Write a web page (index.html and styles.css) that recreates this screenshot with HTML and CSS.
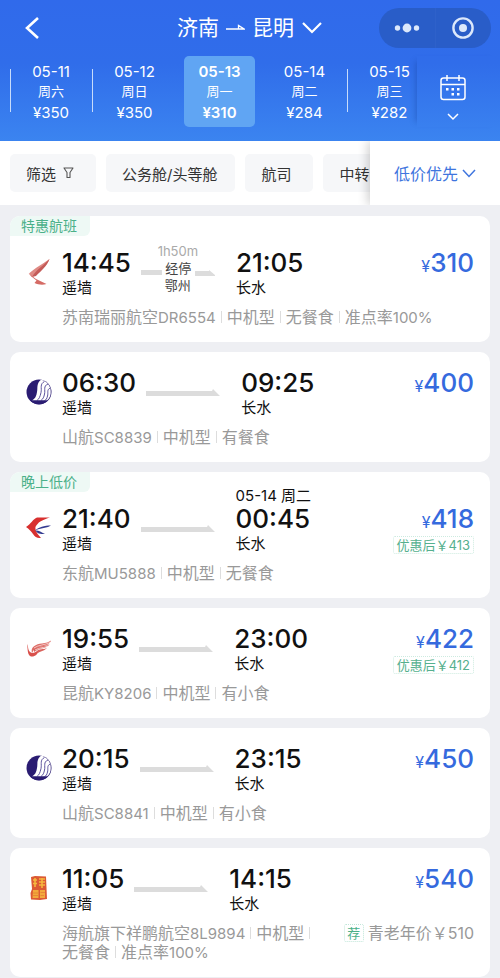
FILE: index.html
```html
<!DOCTYPE html>
<html lang="zh-CN">
<head>
<meta charset="utf-8">
<meta name="viewport" content="width=device-width, initial-scale=1">
<title>济南 - 昆明</title>
<link rel="stylesheet" href="styles.css">
</head>
<body>
<svg class="defs" aria-hidden="true">
  <symbol id="arrow" viewBox="0 0 74 7"><path d="M0 2H66L67 0L74 7H0Z" fill="#dcdcdc"/></symbol>
  <symbol id="shandong" viewBox="0 0 26 26">
    <circle cx="13" cy="13" r="12.500" fill="#2a1c72"/>
    <path d="M15 .8C10 5 12 9 11 13C10.500 17 9 20 6 21.500H21C24 19 25 16 24.700 12C25 7 20 1.500 15 .8Z" fill="#fff"/>
    <path d="M18.500 2.500C13.500 5 16 9 15 13.500C14 18 13 20 11 21.500M22 5C17 7 19.500 11 18.500 15C18 18 17 20 15 21.500M24 9C20.500 11 22.500 14 21.500 17C21 19.500 20 21 18.500 21.500" fill="none" stroke="#4c4192" stroke-width=".9"/>
    <path d="M4 21.500H22C17 26.500 9 26.500 4 21.500Z" fill="#2a1c72"/>
  </symbol>
</svg>

<header class="header">
  <div class="topbar">
    <button class="plain back" aria-label="返回"><svg width="16" height="24" viewBox="0 0 16 24"><path d="M14 2L3 12L14 22" fill="none" stroke="#fff" stroke-width="2.600"/></svg></button>
    <button class="plain title">
      <span>济南</span>
      <svg width="19" height="8" viewBox="0 0 19 8"><path d="M0 5H18L12.500 1.500V5" fill="none" stroke="#fff" stroke-width="1.300"/></svg>
      <span>昆明</span>
      <svg width="22" height="14" viewBox="0 0 22 14"><path d="M2 2L11 11L20 2" fill="none" stroke="#fff" stroke-width="2.200"/></svg>
    </button>
    <div class="capsule">
      <button class="plain" aria-label="更多"><svg width="26" height="10" viewBox="0 0 26 10"><g fill="#dce8fb"><circle cx="3.500" cy="5" r="2.700"/><circle cx="13" cy="5" r="4.400"/><circle cx="22.500" cy="5" r="2.700"/></g></svg></button>
      <button class="plain" aria-label="关闭"><svg width="24" height="24" viewBox="0 0 24 24"><circle cx="12" cy="12" r="9.600" fill="none" stroke="#dce8fb" stroke-width="2.400"/><circle cx="12" cy="12" r="4" fill="#dce8fb"/></svg></button>
    </div>
  </div>
  <div class="dates">
    <div class="strip">
      <button class="plain date first ruled"><span>05-11</span><small>周六</small><b>¥350</b></button>
      <button class="plain date ruled"><span>05-12</span><small>周日</small><b>¥350</b></button>
      <button class="plain date selected"><span>05-13</span><small>周一</small><b>¥310</b></button>
      <button class="plain date"><span>05-14</span><small>周二</small><b>¥284</b></button>
      <button class="plain date ruled"><span>05-15</span><small>周三</small><b>¥282</b></button>
    </div>
    <button class="plain calendar" aria-label="选择日期">
      <svg width="26" height="26" viewBox="0 0 26 26"><g fill="none" stroke="#fff" stroke-width="1.500"><rect x="1" y="3" width="24" height="21.500" rx="2.500"/><path d="M1 9.500H25M7 0V6M19 0V6"/></g><g fill="#fff"><rect x="6" y="13" width="2.500" height="2.500"/><rect x="11.500" y="13" width="2.500" height="2.500"/><rect x="17" y="13" width="2.500" height="2.500"/><rect x="11.500" y="18" width="2.500" height="2.500"/><rect x="17" y="18" width="2.500" height="2.500"/></g></svg>
      <svg width="12" height="8" viewBox="0 0 12 8"><path d="M1 1L6 6L11 1" fill="none" stroke="#fff" stroke-width="1.500"/></svg>
    </button>
  </div>
</header>

<nav class="filters" aria-label="筛选">
  <div class="chips">
    <button class="chip">筛选<svg width="11" height="12" viewBox="0 0 11 12"><path d="M1 1H10L7 5.500V10.500H4V5.500Z" fill="none" stroke="#555" stroke-width="1.100" stroke-linejoin="round"/></svg></button>
    <button class="chip">公务舱/头等舱</button>
    <button class="chip wide">航司</button>
    <button class="chip">中转</button>
  </div>
  <button class="plain sort">低价优先<svg width="14" height="9" viewBox="0 0 14 9"><path d="M1 1L7 7.500L13 1" fill="none" stroke="#3f75de" stroke-width="1.500"/></svg></button>
</nav>

<main class="list">
  <article class="card">
    <span class="tag">特惠航班</span>
    <div class="flight tagged">
      <svg class="logo" viewBox="0 0 26 26"><path d="M23.500 0C18 4 9 9 3 14.500L6 18L10 16C14 11 21 7 23.500 0Z" fill="#df8a84"/><path d="M23.500 0C17 7 10 11 6 18L10 17C15 12 21 7 23.500 0Z" fill="#c45b58"/><path d="M2.500 14.500L10 20L20.500 25C16 26.500 12 25.500 8.500 24L10.500 21.500L6 18Z" fill="#d56b65"/></svg>
      <div class="info">
        <div class="row">
          <div class="point"><time>14:45</time><span>遥墙</span></div>
          <div class="stopover"><small>1h50m</small><div class="via"><i></i><span>经停</span><svg width="20" height="6" viewBox="0 0 20 6"><path d="M0 1H14V0L20 5V6H0Z" fill="#dcdcdc"/></svg></div><span>鄂州</span></div>
          <div class="point"><time>21:05</time><span>长水</span></div>
          <div class="fare"><strong><small>¥</small>310</strong></div>
        </div>
        <div class="bottom"><p class="meta"><span>苏南瑞丽航空<b>DR6554</b></span><i></i><span>中机型</span><i></i><span>无餐食</span><i></i><span>准点率<b>100%</b></span></p></div>
      </div>
    </div>
  </article>

  <article class="card">
    <div class="flight">
      <svg class="logo"><use href="#shandong"/></svg>
      <div class="info">
        <div class="row">
          <div class="point"><time>06:30</time><span>遥墙</span></div>
          <svg class="arrow"><use href="#arrow"/></svg>
          <div class="point"><time>09:25</time><span>长水</span></div>
          <div class="fare"><strong><small>¥</small>400</strong></div>
        </div>
        <div class="bottom"><p class="meta"><span>山航<b>SC8839</b></span><i></i><span>中机型</span><i></i><span>有餐食</span></p></div>
      </div>
    </div>
  </article>

  <article class="card">
    <span class="tag">晚上低价</span>
    <div class="flight tagged">
      <svg class="logo" viewBox="0 0 26 26"><path d="M0 12C5 9 7 4 11 2.500H24C19 4 14 6 12 8.500C10 10.500 9 12 9.500 14C10 18 13 20 15 23C11 23.500 9 22 7 19C5 16 3 14 0 12Z" fill="#d8302f"/><path d="M25 10.500C18 10.500 13 12 9 15.500C13 13.500 18 13 22 12ZM9.500 15.500C12 15 15 17 19 19C14 19 11 18.500 9.500 15.500Z" fill="#343b91"/></svg>
      <div class="info">
        <div class="row">
          <div class="point"><time>21:40</time><span>遥墙</span></div>
          <svg class="arrow"><use href="#arrow"/></svg>
          <div class="point"><em class="nextday">05-14 周二</em><time>00:45</time><span>长水</span></div>
          <div class="fare"><strong><small>¥</small>418</strong><span class="deal">优惠后￥413</span></div>
        </div>
        <div class="bottom"><p class="meta"><span>东航<b>MU5888</b></span><i></i><span>中机型</span><i></i><span>无餐食</span></p></div>
      </div>
    </div>
  </article>

  <article class="card">
    <div class="flight">
      <svg class="logo" viewBox="0 0 26 26"><path d="M1 9C3 12 1 16 6 18C9 18 10 16 13 15C12 19 9 22 5 21.500C1 20 2 14 1 9Z" fill="#d9504b"/><path d="M6 18C4 12 10 9 16 8.500C20 8 23 7 25 5.500C24 9 20 11 15 11.500C11 12 8 14 6 18Z" fill="#de6c66"/><path d="M8 14C13 10 20 12 23.500 9C22 13 16 13 12 14.500L8 17M11 16C15 13 19 15 21 12.500C19 16 15 16 12 18" fill="#d9635d"/><path d="M8 13C12 10 19 10 24 7.500M9 15C14 12 18 13 22 11" fill="none" stroke="#fff" stroke-width=".6"/></svg>
      <div class="info">
        <div class="row">
          <div class="point"><time>19:55</time><span>遥墙</span></div>
          <svg class="arrow"><use href="#arrow"/></svg>
          <div class="point"><time>23:00</time><span>长水</span></div>
          <div class="fare"><strong><small>¥</small>422</strong><span class="deal">优惠后￥412</span></div>
        </div>
        <div class="bottom"><p class="meta"><span>昆航<b>KY8206</b></span><i></i><span>中机型</span><i></i><span>有小食</span></p></div>
      </div>
    </div>
  </article>

  <article class="card">
    <div class="flight">
      <svg class="logo"><use href="#shandong"/></svg>
      <div class="info">
        <div class="row">
          <div class="point"><time>20:15</time><span>遥墙</span></div>
          <svg class="arrow"><use href="#arrow"/></svg>
          <div class="point"><time>23:15</time><span>长水</span></div>
          <div class="fare"><strong><small>¥</small>450</strong></div>
        </div>
        <div class="bottom"><p class="meta"><span>山航<b>SC8841</b></span><i></i><span>中机型</span><i></i><span>有小食</span></p></div>
      </div>
    </div>
  </article>

  <article class="card">
    <div class="flight">
      <svg class="logo" viewBox="0 0 26 26"><path d="M5 2L9 1L20 1.500L21 24L14 25L5 24.500L4.500 18L6 14Z" fill="#dc5a34"/><g fill="none" stroke="#f5b83e" stroke-width="1.600"><path d="M7 5H11M9 3V12M7 8.500H11M13 4H19M13 7H19M13 10H19M16 3V13"/></g><path d="M7 15H12.500V23H6.500ZM14 15H19V23H14Z" fill="#f2a93b"/><path d="M7 18H12M7 20.500H12M14.500 17.500H19M14.500 20.500H18" stroke="#e57e34" stroke-width=".8"/></svg>
      <div class="info">
        <div class="row">
          <div class="point"><time>11:05</time><span>遥墙</span></div>
          <svg class="arrow"><use href="#arrow"/></svg>
          <div class="point"><time>14:15</time><span>长水</span></div>
          <div class="fare"><strong><small>¥</small>540</strong></div>
        </div>
        <div class="bottom"><p class="meta"><span>海航旗下祥鹏航空<b>8L9894</b></span><i></i><span>中机型</span><i></i> <span>无餐食</span><i></i><span>准点率<b>100%</b></span></p><p class="promo"><span class="pick">荐</span>青老年价￥510</p></div>
      </div>
    </div>
  </article>
</main>
</body>
</html>
```
FILE: styles.css
```css
* { box-sizing: border-box; }

body {
  margin: 0;
  min-height: 100vh;
  background: #eeeff3;
  color: #111;
  font-family: Inter, "Noto Sans CJK SC", sans-serif;
  font-size: 15px;
}

button {
  font: inherit;
  color: inherit;
  cursor: pointer;
}

.plain {
  padding: 0;
  border: 0;
  background: none;
}

svg { display: block; flex: none; }
.defs { position: absolute; width: 0; height: 0; }

/* Header */
.header {
  padding-bottom: 14px;
  background: linear-gradient(#306aeb 0%, #306dea 45%, #3b84f0 100%);
  color: #fff;
}

.topbar {
  display: grid;
  grid-template-columns: 1fr auto 1fr;
  align-items: center;
  height: 56px;
  padding: 0 9px 0 24px;
}

.back { justify-self: start; }

.title {
  display: flex;
  align-items: center;
  gap: 7px;
  margin-right: 15px;
  font-size: 21px;
  line-height: 30px;
}

.capsule {
  justify-self: end;
  display: flex;
  width: 112px;
  height: 40px;
  border-radius: 20px;
  background: #295dc8;
}

.capsule button {
  flex: 1;
  display: grid;
  place-items: center;
}

.capsule button + button { border-left: 1px solid #2e61ca; }

.dates { display: flex; }

.strip {
  flex: 1;
  min-width: 0;
  display: flex;
  padding-left: 10px;
  overflow: hidden;
}

.date {
  position: relative;
  flex: none;
  display: flex;
  flex-direction: column;
  align-items: center;
  width: 85px;
  height: 71px;
  padding-top: 7px;
}

.date.first { width: 82px; }
.date span { line-height: 18px; }
.date small { font-size: 13px; font-weight: 400; line-height: 20px; }
.date b { font-weight: 400; line-height: 24px; }

.ruled::before {
  content: "";
  position: absolute;
  left: 0;
  top: 13px;
  width: 1px;
  height: 43px;
  background: #c8dcfb;
}

.date.selected {
  width: 71px;
  margin: 0 7px;
  border-radius: 5px;
  background: #60a5f3;
  font-weight: 600;
}

.date.selected b { font-weight: 600; }

.calendar {
  flex: none;
  display: flex;
  flex-direction: column;
  align-items: center;
  gap: 12px;
  width: 83px;
  padding: 19px 12px 0 0;
  box-shadow: -6px 0 6px -5px rgba(20, 60, 150, 0.4);
}

/* Filters */
.filters {
  display: flex;
  height: 64px;
  background: #fff;
  overflow: hidden;
}

.chips {
  flex: 1;
  min-width: 0;
  display: flex;
  align-items: center;
  gap: 10px;
  padding-left: 10px;
  overflow: hidden;
}

.chip {
  flex: none;
  display: flex;
  align-items: center;
  gap: 7px;
  height: 38px;
  padding: 0 18px 0 16px;
  border: 0;
  border-radius: 5px;
  background: #f6f7f9;
  color: #333;
}

.chip svg { margin-right: 4px; }
.chip.wide { padding-right: 22px; }

.sort {
  flex: none;
  display: flex;
  align-items: center;
  justify-content: center;
  gap: 4px;
  width: 130px;
  color: #3f75de;
  font-size: 16px;
  box-shadow: -2px 0 10px rgba(0, 0, 0, 0.2);
}

/* Flight list */
.list {
  display: flex;
  flex-direction: column;
  gap: 10px;
  padding: 11px 10px 0;
}

.card {
  border-radius: 10px;
  background: #fff;
  overflow: hidden;
}

.tag {
  display: block;
  width: 80px;
  height: 20px;
  padding-left: 11px;
  border-bottom-right-radius: 6px;
  background: #eef9f5;
  color: #4bb089;
  font-size: 14px;
  line-height: 20px;
}

.flight {
  display: flex;
  gap: 10px;
  padding: 16px 16px 15px;
}

.flight.tagged { padding-top: 12px; }

.logo {
  width: 26px;
  height: 26px;
  margin-top: 11px;
}

.info { flex: 1; min-width: 0; }
.row { display: flex; }

.point {
  position: relative;
  display: flex;
  flex-direction: column;
}

.point time {
  font-size: 26px;
  font-weight: 500;
  line-height: 30px;
}

.point span { line-height: 20px; }

.nextday {
  position: absolute;
  left: 0;
  bottom: 50px;
  font-size: 15px;
  font-style: normal;
  line-height: 16px;
  white-space: nowrap;
}

.arrow {
  width: 74px;
  height: 7px;
  margin: 21px 21px 0 10px;
}

.stopover {
  display: flex;
  flex-direction: column;
  align-items: center;
  width: 74px;
  margin: -5px 21px 0 10px;
  color: #444;
  font-size: 13px;
  line-height: 17px;
}

.stopover small { color: #aaa; font-size: 13px; }

.via {
  align-self: stretch;
  display: flex;
  justify-content: space-between;
  align-items: center;
}

.via i, .via svg { margin-top: 8px; }

.via i {
  width: 21px;
  height: 5px;
  background: #dcdcdc;
}

.fare {
  display: flex;
  flex-direction: column;
  align-items: flex-end;
  gap: 2px;
  margin-left: auto;
  color: #356ade;
}

.fare strong {
  font-size: 26px;
  font-weight: 500;
  line-height: 30px;
}

.fare small { font-size: 16px; font-weight: 400; line-height: 16px; }

.deal {
  padding: 0 3px;
  border: 1px dotted #cdebe0;
  border-radius: 2px;
  color: #55b08e;
  font-size: 13px;
  line-height: 16px;
}

.bottom {
  display: flex;
  margin-top: 10px;
  color: #999;
  font-size: 16px;
  line-height: 19px;
}

.meta {
  flex: 1;
  min-width: 0;
  margin: 0;
}

.meta span { white-space: nowrap; }
.meta b { font-size: 15px; font-weight: 400; }

.meta i {
  display: inline-block;
  width: 1px;
  height: 12px;
  margin: 0 5px;
  background: #ddd;
}

.promo {
  flex: none;
  display: flex;
  gap: 4px;
  margin: 0;
}

.pick {
  width: 20px;
  height: 18px;
  border: 1px dotted #bfe6d8;
  border-radius: 2px;
  color: #4bb089;
  font-size: 13px;
  line-height: 16px;
  text-align: center;
}
```
